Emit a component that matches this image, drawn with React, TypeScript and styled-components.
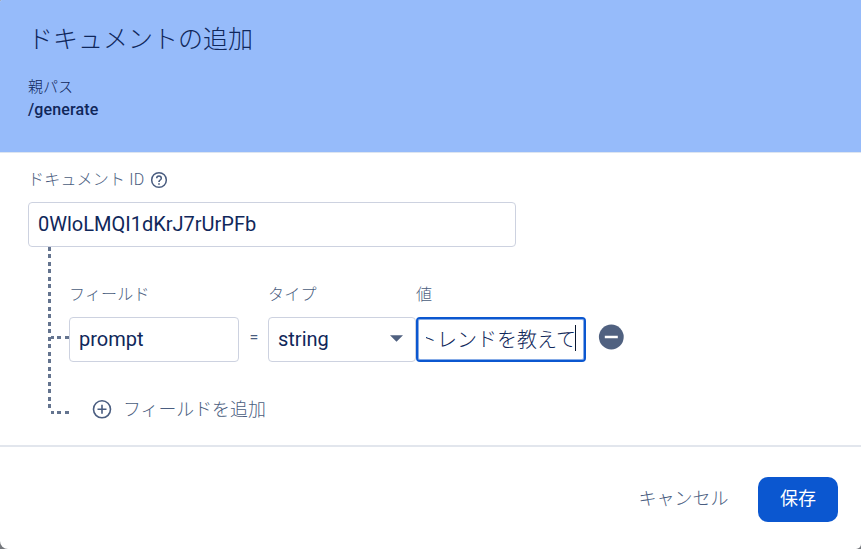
import React from 'react';
import styled, { createGlobalStyle } from 'styled-components';

const GlobalStyle = createGlobalStyle`
  * { box-sizing: border-box; }
  body {
    margin: 0;
    background: #75787d;
    font-family: Roboto, "Noto Sans CJK JP", sans-serif;
    color: #10275a;
    overflow: hidden;
  }
`;

const Dialog = styled.div`
  width: 861px;
  height: 549px;
  display: flex;
  flex-direction: column;
  background: #fff;
  border-radius: 2px 0 5px 8px;
  overflow: hidden;
`;

const Header = styled.header`
  height: 153px;
  padding: 22px 28px 0;
  background: #96bbfa;
  border-bottom: 1px solid #dde5f0;
`;

const Title = styled.h1`
  margin: 0;
  font-size: 25px;
  line-height: 36px;
  font-weight: 300;
`;

const ParentLabel = styled.div`
  margin-top: 18px;
  font-size: 15px;
  line-height: 22px;
  font-weight: 300;
`;

const ParentPath = styled.div`
  padding-top: 1px;
  font-size: 16px;
  line-height: 22px;
  font-weight: 500;
  letter-spacing: 0.12px;
`;

const Body = styled.main`
  height: 292px;
  padding: 15px 28px 0;
`;

const Label = styled.span`
  display: block;
  font-size: 16px;
  line-height: 24px;
  font-weight: 300;
  letter-spacing: 0.2px;
  color: #4a5d80;
`;

const IdLabel = styled.div`
  height: 24px;
  display: flex;
  align-items: center;
  gap: 6px;
`;

const Box = styled.div<{ $width: number; $focused?: boolean }>`
  width: ${(p) => p.$width}px;
  height: 45px;
  flex: none;
  display: flex;
  align-items: center;
  justify-content: space-between;
  padding: 0 9px 2px;
  border: 1px solid #cdd2e0;
  border-radius: 4px;
  font-size: 20px;
  white-space: nowrap;
  ${(p) => p.$focused && `
    border: 2px solid #0b57d0;
    box-shadow: inset 0 0 0 1px rgba(11, 87, 208, 0.5);
    padding: 0 8px 3px;
    font-weight: 300;
  `}
`;

const IdBox = styled(Box)`
  margin-top: 10px;
`;

const Tree = styled.div`
  display: flex;
`;

const DOT = '#64748f';
const Rail = styled.div`
  width: 41px;
  height: 167px;
  flex: none;
  background:
    repeating-linear-gradient(to bottom, ${DOT} 0 3.7px, transparent 3.7px 7.5px) 20px 0 / 3px 162px no-repeat,
    repeating-linear-gradient(to right, ${DOT} 0 2.7px, transparent 2.7px 6.3px, ${DOT} 6.3px 7.5px) 23px 89px / 18px 3px no-repeat,
    repeating-linear-gradient(to right, ${DOT} 0 2.7px, transparent 2.7px 6.3px, ${DOT} 6.3px 7.5px) 23px 164px / 18px 3px no-repeat;
`;

const Fields = styled.div`
  padding-top: 36px;
`;

const FieldRow = styled.div`
  display: flex;
  align-items: flex-end;
`;

const Field = styled.div`
  display: flex;
  flex-direction: column;
  gap: 10px;
`;

const Equals = styled.span`
  width: 29px;
  height: 45px;
  text-align: center;
  font-size: 16px;
  line-height: 42px;
  padding-left: 1px;
  color: #4a5d80;
`;

const Clip = styled.div`
  width: 150px;
  height: 34px;
  display: flex;
  align-items: center;
  justify-content: flex-end;
  overflow: hidden;
`;

const Caret = styled.i`
  width: 1px;
  height: 26px;
  margin-left: -1px;
  flex: none;
  background: #07152f;
`;

const RemoveButton = styled.button`
  width: 26px;
  height: 45px;
  margin-left: 12px;
  padding: 0 0 5px;
  display: flex;
  align-items: center;
  justify-content: center;
  border: 0;
  background: none;
`;

const AddButton = styled.button`
  display: flex;
  align-items: center;
  gap: 11px;
  margin-top: 35px;
  padding: 0 0 0 23px;
  height: 26px;
  border: 0;
  background: none;
  font: 300 17.9px/26px Roboto, "Noto Sans CJK JP", sans-serif;
  color: #4a5d80;
`;

const Footer = styled.footer`
  height: 104px;
  padding: 30px 23px 0;
  display: flex;
  align-items: flex-start;
  justify-content: flex-end;
  border-top: 2px solid #e2e6ed;
`;

const Action = styled.button<{ $primary?: boolean }>`
  height: 45px;
  width: ${(p) => (p.$primary ? 80 : 149)}px;
  padding: 0 0 2px;
  border: 0;
  border-radius: 10px;
  font: ${(p) => (p.$primary ? 400 : 300)} 18px/26px Roboto, "Noto Sans CJK JP", sans-serif;
  background: ${(p) => (p.$primary ? '#0b57d0' : 'transparent')};
  color: ${(p) => (p.$primary ? '#fff' : '#4a5d80')};
`;

const HelpIcon = () => (
  <svg width="18" height="18" viewBox="0 0 20 20" fill="#4a5d80">
    <path d="M10 1a9 9 0 1 0 0 18 9 9 0 0 0 0-18zm0 16.3a7.3 7.3 0 1 1 0-14.6 7.3 7.3 0 0 1 0 14.6zM9.1 13.6h1.8v1.8H9.1zM10 4.6a3.4 3.4 0 0 0-3.4 3.4h1.7a1.7 1.7 0 0 1 3.4 0c0 1.7-2.6 1.5-2.6 4.3h1.8c0-2 2.5-2.2 2.5-4.3A3.4 3.4 0 0 0 10 4.6z" />
  </svg>
);

const AddIcon = () => (
  <svg width="20" height="20" viewBox="0 0 20 20" fill="none" stroke="#4a5d80" strokeWidth="1.6">
    <circle cx="10" cy="9.3" r="8.5" />
    <path d="M10 4.8v9M5.5 9.3h9" />
  </svg>
);

const RemoveIcon = () => (
  <svg width="26" height="26" viewBox="0 0 26 26">
    <circle cx="13.3" cy="13" r="12.4" fill="#506180" />
    <path d="M6.8 13h13" stroke="#fff" strokeWidth="2.5" />
  </svg>
);

const Arrow = styled.svg`
  width: 13px;
  height: 7px;
  margin-right: 3px;
`;

const ArrowIcon = () => (
  <Arrow viewBox="0 0 14 7">
    <path d="M0 0h14L7 7z" fill="#506180" />
  </Arrow>
);

export default function App() {
  return (
    <>
      <GlobalStyle />
      <Dialog>
        <Header>
          <Title>ドキュメントの追加</Title>
          <ParentLabel>親パス</ParentLabel>
          <ParentPath>/generate</ParentPath>
        </Header>
        <Body>
          <IdLabel>
            <Label>ドキュメント ID</Label>
            <HelpIcon />
          </IdLabel>
          <IdBox $width={488}>0WloLMQI1dKrJ7rUrPFb</IdBox>
          <Tree>
            <Rail />
            <Fields>
              <FieldRow>
                <Field>
                  <Label>フィールド</Label>
                  <Box $width={170}>prompt</Box>
                </Field>
                <Equals>=</Equals>
                <Field>
                  <Label>タイプ</Label>
                  <Box $width={148}>
                    string
                    <ArrowIcon />
                  </Box>
                </Field>
                <Field>
                  <Label>値</Label>
                  <Box $width={170} $focused>
                    <Clip>
                      <span>トレンドを教えて</span>
                      <Caret />
                    </Clip>
                  </Box>
                </Field>
                <RemoveButton aria-label="フィールドを削除">
                  <RemoveIcon />
                </RemoveButton>
              </FieldRow>
              <AddButton>
                <AddIcon />
                フィールドを追加
              </AddButton>
            </Fields>
          </Tree>
        </Body>
        <Footer>
          <Action>キャンセル</Action>
          <Action $primary>保存</Action>
        </Footer>
      </Dialog>
    </>
  );
}
